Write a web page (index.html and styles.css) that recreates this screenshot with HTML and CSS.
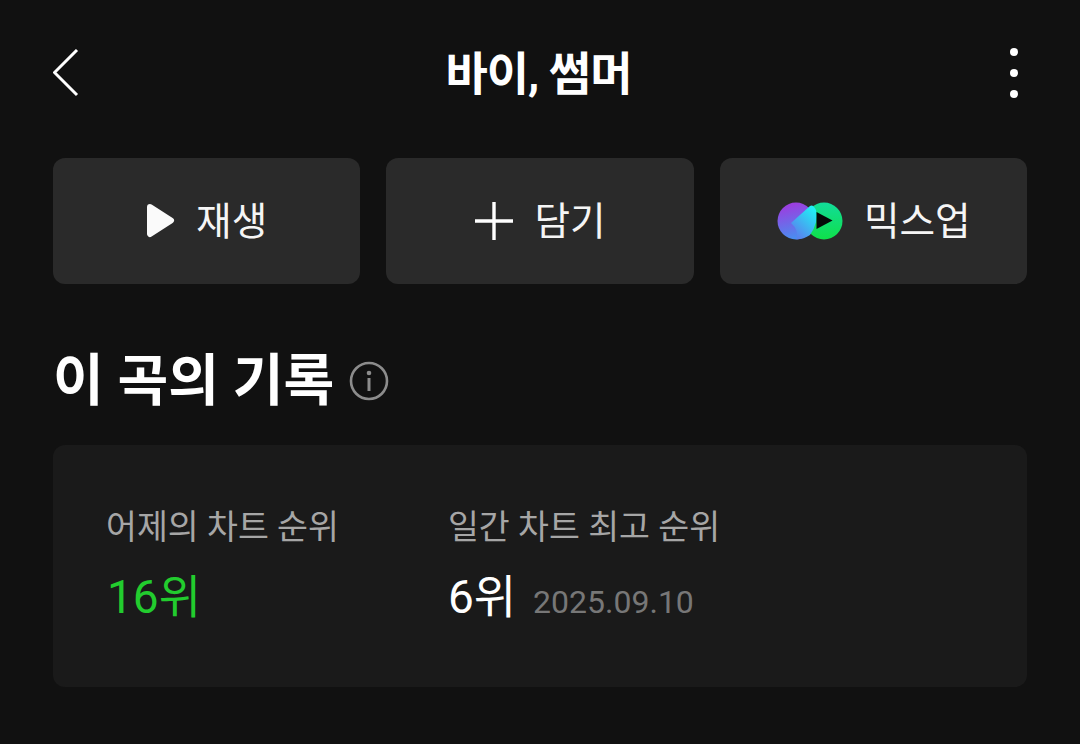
FILE: index.html
```html
<!DOCTYPE html>
<html lang="ko">
  <head>
    <meta charset="UTF-8" />
    <meta name="viewport" content="width=device-width, initial-scale=1.0" />
    <title>바이, 썸머</title>
    <link rel="stylesheet" href="styles.css">
  </head>
  <body>
    <div class="whole">
      <div class="top">
        <svg class="back" width="28" height="48" viewBox="0 0 28 48">
          <path d="M24 1 L1.5 23.5 L24 46" fill="none" stroke="#fff" stroke-width="3" />
        </svg>
        <div class="title">바이, 썸머</div>
        <div class="more">
          <span class="dot"></span>
          <span class="dot"></span>
          <span class="dot"></span>
        </div>
      </div>

      <div class="buttons">
        <div class="btn">
          <svg width="28" height="36" viewBox="0 0 28 36">
            <path d="M3 4 L24 17.5 L3 31 Z" fill="#fafafa" stroke="#fafafa" stroke-width="6" stroke-linejoin="round" />
          </svg>
          <span class="btn-text">재생</span>
        </div>
        <div class="btn">
          <svg width="38" height="38" viewBox="0 0 38 38">
            <path d="M0 19 H38 M19 0 V38" fill="none" stroke="#fff" stroke-width="3.4" />
          </svg>
          <span class="btn-text">담기</span>
        </div>
        <div class="btn">
          <svg width="66" height="38" viewBox="0 0 66 38">
            <defs>
              <linearGradient id="mixleft" gradientUnits="userSpaceOnUse" x1="14" y1="3" x2="22" y2="35">
                <stop offset="0" stop-color="#9a3fe0" />
                <stop offset="1" stop-color="#4a8df0" />
              </linearGradient>
              <linearGradient id="mixright" x1="0.5" y1="0" x2="0.5" y2="1">
                <stop offset="0" stop-color="#12dc9a" />
                <stop offset="1" stop-color="#0fe04a" />
              </linearGradient>
              <linearGradient id="mixmid" gradientUnits="userSpaceOnUse" x1="15" y1="30" x2="37" y2="8">
                <stop offset="0" stop-color="#5a80ee" />
                <stop offset="1" stop-color="#20eef5" />
              </linearGradient>
            </defs>
            <circle cx="47" cy="19" r="18.5" fill="url(#mixright)" />
            <circle cx="19" cy="19" r="18.5" fill="url(#mixleft)" />
            <path d="M14 21 L33 4 Q36 2 39 8 Q42 20 33 33 Q27 37 19.5 37.5 Q22 28 14 21 Z" fill="url(#mixmid)" />
            <path d="M39.5 10 L55.5 18.5 L39.5 27 Z" fill="#050a08" />
          </svg>
          <span class="btn-text">믹스업</span>
        </div>
      </div>

      <div class="head">
        <h2 class="head-text">이 곡의 기록</h2>
        <svg width="40" height="40" viewBox="0 0 40 40">
          <circle cx="20" cy="20" r="18" fill="none" stroke="#8c8c8c" stroke-width="2.6" />
          <circle cx="20" cy="12" r="2.3" fill="#8c8c8c" />
          <path d="M20 17 V30" fill="none" stroke="#8c8c8c" stroke-width="3" />
        </svg>
      </div>

      <div class="card">
        <div class="stat">
          <div class="label">어제의 차트 순위</div>
          <div class="value green">16위</div>
        </div>
        <div class="stat">
          <div class="label">일간 차트 최고 순위</div>
          <div class="value best">6위<span class="date">2025.09.10</span></div>
        </div>
      </div>
    </div>
  </body>
</html>
```

FILE: styles.css
```css
body {
  margin: 0;
  background-color: #111111;
  color: white;
  font-family: Roboto, "Noto Sans CJK KR", sans-serif;
}
.whole {
  padding: 47px 53px 0;
}
.top {
  display: flex;
  align-items: center;
  height: 52px;
}
.title {
  flex: 1;
  margin-top: -6px;
  padding-right: 3px;
  text-align: center;
  font-size: 46px;
  font-weight: bold;
  letter-spacing: -1px;
}
.more {
  display: flex;
  flex-direction: column;
  align-items: flex-end;
  gap: 13px;
  width: 22px;
  margin-right: 9px;
  margin-left: -3px;
}
.dot {
  width: 8px;
  height: 8px;
  border-radius: 50%;
  background-color: white;
}
.buttons {
  display: flex;
  gap: 26px;
  margin-top: 59px;
}
.btn {
  flex: 1;
  height: 126px;
  display: flex;
  justify-content: center;
  align-items: center;
  gap: 21px;
  padding-left: 1px;
  background-color: #2a2a2a;
  border-radius: 12px;
}
.btn-text {
  margin-bottom: 6px;
  font-size: 38.7px;
  color: #f5f5f5;
}
.head {
  display: flex;
  align-items: center;
  gap: 15px;
  margin-top: 64px;
}
.head-text {
  margin: 0;
  font-size: 55.2px;
  font-weight: bold;
  line-height: 66px;
}
.card {
  display: flex;
  gap: 110px;
  height: 242px;
  box-sizing: border-box;
  margin-top: 31px;
  padding: 59px 54px 0;
  background-color: #1a1a1a;
  border-radius: 12px;
}
.label {
  font-size: 33.6px;
  line-height: 48px;
  margin-left: -1px;
  color: #a6a6a6;
}
.value {
  display: flex;
  align-items: baseline;
  font-size: 46px;
  line-height: 60px;
  margin-top: 15px;
}
.green {
  color: #22cc2e;
}
.best {
  margin-left: -1px;
}
.date {
  margin-left: 17px;
  font-size: 32px;
  color: #777777;
}
```
